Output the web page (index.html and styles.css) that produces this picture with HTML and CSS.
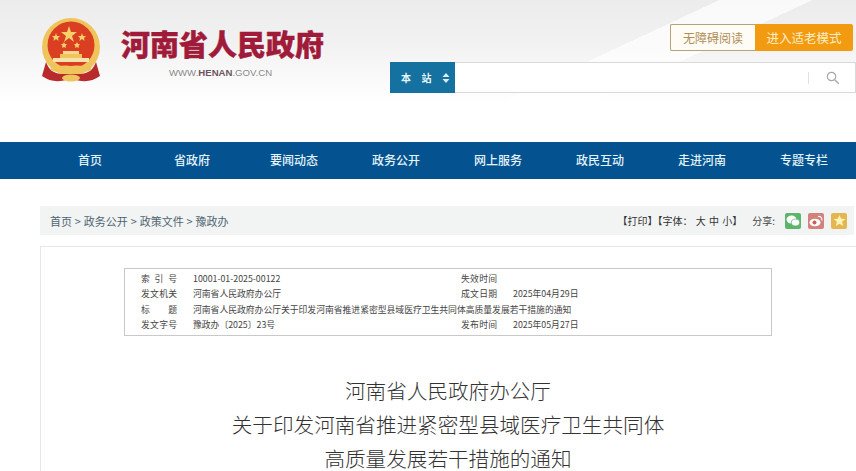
FILE: index.html
```html
<!DOCTYPE html>
<html lang="zh-CN">
<head>
    <meta charset="UTF-8">
    <meta name="viewport" content="width=device-width, initial-scale=1.0">
    <title>河南省人民政府办公厅关于印发河南省推进紧密型县域医疗卫生共同体高质量发展若干措施的通知</title>
    <link rel="stylesheet" href="styles.css">
</head>
<body>
    <header class="site-header">
        <div class="brand">
            <svg class="emblem" width="60" height="66" viewBox="0 0 60 66">
                <circle cx="30" cy="29" r="29" fill="#f0c45c"/>
                <circle cx="30" cy="27" r="23.5" fill="#da3f22"/>
                <polygon points="28,8 30,14 36,14 31,18 33,24 28,20 23,24 25,18 20,14 26,14" fill="#f7cf6b"/>
                <polygon points="15,15 16,18 19,18 17,20 17.500,23 15,21 12.500,23 13,20 11,18 14,18" fill="#f7cf6b"/>
                <polygon points="41,15 42,18 45,18 43,20 43.500,23 41,21 38.500,23 39,20 37,18 40,18" fill="#f7cf6b"/>
                <polygon points="23,24 24,26 26,26 24.500,28 25,30 23,29 21,30 21.500,28 20,26 22,26" fill="#f7cf6b"/>
                <polygon points="36,24 37,26 39,26 37.500,28 38,30 36,29 34,30 34.500,28 33,26 35,26" fill="#f7cf6b"/>
                <rect x="22" y="33" width="16" height="3" fill="#f6d98f"/>
                <rect x="19" y="36" width="22" height="4" fill="#f0c45c"/>
                <rect x="12" y="40" width="36" height="4" fill="#f6e3ab"/>
                <path d="M5 44 C8 52 12 55 20 56 L40 56 C48 55 52 52 55 44 L59 58 C50 64 42 65 30 60 C18 65 10 64 1 58 Z" fill="#b92a2c"/>
                <path d="M10 45 C16 50 22 46 30 48 C38 46 44 50 50 45 L50 52 C42 56 36 52 30 54 C24 52 18 56 10 52 Z" fill="#f0c45c"/>
                <ellipse cx="30" cy="60" rx="9" ry="3.500" fill="#f0c45c"/>
            </svg>
            <div class="brand-text">
                <div class="brand-name">河南省人民政府</div>
                <div class="brand-url">WWW.<b>HENAN</b>.GOV.CN</div>
            </div>
        </div>
        <div class="header-right">
            <div class="mode-buttons">
                <a class="mode-btn">无障碍阅读</a>
                <a class="mode-btn mode-old">进入适老模式</a>
            </div>
            <div class="search-box">
                <div class="search-scope">
                    <span>本&nbsp;&nbsp;站</span>
                    <svg width="8" height="12" viewBox="0 0 8 12"><path d="M4 1 L7.500 5 L0.500 5 Z M0.500 7 L7.500 7 L4 11 Z" fill="#d8eef6"/></svg>
                </div>
                <div class="search-input"></div>
                <div class="search-sep"></div>
                <svg class="search-icon" width="14" height="14" viewBox="0 0 14 14"><circle cx="5.500" cy="5.500" r="4.200" fill="none" stroke="#a9a9a9" stroke-width="1.200"/><path d="M8.700 8.700 L12.800 12.800" stroke="#a9a9a9" stroke-width="1.400"/></svg>
            </div>
        </div>
    </header>

    <nav class="main-nav">
        <a>首页</a>
        <a>省政府</a>
        <a>要闻动态</a>
        <a>政务公开</a>
        <a>网上服务</a>
        <a>政民互动</a>
        <a>走进河南</a>
        <a>专题专栏</a>
    </nav>

    <div class="crumb-bar">
        <div class="crumbs">首页 &gt; 政务公开 &gt; 政策文件 &gt; 豫政办</div>
        <div class="tools">
            <span class="tool-links">【打印】【字体： 大 中 小】</span>
            <span class="share-label">分享:</span>
            <a class="share share-wechat">
                <svg width="14" height="12" viewBox="0 0 14 12"><ellipse cx="5.500" cy="4.500" rx="5" ry="4" fill="#fff"/><ellipse cx="9.500" cy="7.500" rx="4.200" ry="3.400" fill="#fff" stroke="#5cb56b" stroke-width="0.700"/></svg>
            </a>
            <a class="share share-weibo">
                <svg width="14" height="12" viewBox="0 0 14 12"><ellipse cx="6" cy="7.500" rx="5.500" ry="3.800" fill="#fff"/><circle cx="5.500" cy="7.500" r="2" fill="#c9605a"/><path d="M9 1.500 C11.500 1 13.500 3 12.800 5.500" fill="none" stroke="#fff" stroke-width="1.100"/></svg>
            </a>
            <a class="share share-star">
                <svg width="13" height="13" viewBox="0 0 14 14"><polygon points="7,1 8.800,5.200 13.300,5.500 9.800,8.400 11,12.900 7,10.400 3,12.900 4.200,8.400 0.700,5.500 5.200,5.200" fill="#fdf2b8"/></svg>
            </a>
        </div>
    </div>

    <main class="doc-card">
        <div class="doc-meta">
            <div class="meta-label">索引号</div>
            <div>10001-01-2025-00122</div>
            <div class="meta-label">失效时间</div>
            <div></div>

            <div class="meta-label">发文机关</div>
            <div>河南省人民政府办公厅</div>
            <div class="meta-label">成文日期</div>
            <div>2025年04月29日</div>

            <div class="meta-label">标题</div>
            <div class="meta-wide">河南省人民政府办公厅关于印发河南省推进紧密型县域医疗卫生共同体高质量发展若干措施的通知</div>

            <div class="meta-label">发文字号</div>
            <div>豫政办〔2025〕23号</div>
            <div class="meta-label">发布时间</div>
            <div>2025年05月27日</div>
        </div>

        <h1 class="doc-title">
            <span>河南省人民政府办公厅</span>
            <span>关于印发河南省推进紧密型县域医疗卫生共同体</span>
            <span>高质量发展若干措施的通知</span>
        </h1>
    </main>
</body>
</html>
```

FILE: styles.css
```css
html, body {
    margin: 0;
    padding: 0;
}
body {
    height: 471px;
    overflow: hidden;
    background-color: #fff;
    font-family: "Liberation Sans", "Noto Sans CJK SC", sans-serif;
    color: #333;
}
a {
    text-decoration: none;
    color: inherit;
}

.site-header {
    height: 142px;
    box-sizing: border-box;
    padding: 18px 0 0 41px;
    display: flex;
    justify-content: space-between;
    background:
        linear-gradient(155deg, transparent 0 62%, rgba(255,255,255,0.7) 62% 70%, transparent 70%),
        linear-gradient(to bottom, #ececec 0, #f1f1f1 40px, #fbfbfb 85px, #fff 105px);
}
.brand {
    display: flex;
    gap: 20px;
}
.emblem {
    display: block;
}
.brand-text {
    padding-top: 6px;
}
.brand-name {
    font-family: "Noto Sans CJK SC", sans-serif;
    font-weight: 900;
    font-size: 29px;
    line-height: 38px;
    color: #a01a3a;
    -webkit-text-stroke: 0.4px #a01a3a;
    white-space: nowrap;
}
.brand-url {
    margin: 5px 0 0 48px;
    font-size: 9.6px;
    line-height: 12px;
    color: #8a8a8a;
}
.brand-url b {
    color: #6d5560;
}

.header-right {
    width: 466px;
    display: flex;
    flex-direction: column;
    align-items: flex-end;
}
.mode-buttons {
    display: flex;
    margin: 6px 3px 0 0;
}
.mode-btn {
    width: 85px;
    height: 27px;
    box-sizing: border-box;
    border: 1px solid #b5a27e;
    border-right: none;
    border-radius: 2px 0 0 2px;
    background-color: #fffcf5;
    color: #b08d55;
    font-family: "Noto Sans CJK SC", sans-serif;
    font-size: 12px;
    line-height: 25px;
    text-align: center;
}
.mode-old {
    width: 98px;
    border: none;
    border-radius: 0 2px 2px 0;
    background-color: #f29a10;
    color: #fdeec6;
    font-size: 12.5px;
    line-height: 27px;
}
.search-box {
    width: 466px;
    height: 31px;
    margin-top: 11px;
    box-sizing: border-box;
    border: 1px solid #d9d9d9;
    border-left: none;
    background-color: #fff;
    display: flex;
    align-items: center;
}
.search-scope {
    width: 65px;
    height: 31px;
    margin-top: -1px;
    margin-bottom: -1px;
    padding-left: 11px;
    box-sizing: border-box;
    background-color: #15719f;
    color: #e8f6fb;
    font-family: "Noto Sans CJK SC", sans-serif;
    font-size: 10px;
    font-weight: 700;
    word-spacing: 3px;
    display: flex;
    align-items: center;
    gap: 10px;
}
.search-input {
    flex: 1;
}
.search-sep {
    width: 1px;
    height: 12px;
    background-color: #e3e3e3;
    margin-right: 17px;
}
.search-icon {
    margin-right: 15px;
}

.main-nav {
    height: 37px;
    padding-left: 39px;
    display: flex;
    background-color: #04528f;
}
.main-nav a {
    width: 102px;
    text-align: center;
    color: #e3f4fb;
    font-family: "Noto Sans CJK SC", sans-serif;
    font-size: 12px;
    font-weight: 500;
    line-height: 36px;
}

.crumb-bar {
    height: 29px;
    margin: 27px 2px 0 40px;
    padding: 0 7px 0 10px;
    display: flex;
    justify-content: space-between;
    align-items: center;
    background-color: #f2f4f4;
    font-family: "Noto Sans CJK SC", sans-serif;
}
.crumbs {
    font-size: 11px;
    word-spacing: 0.4px;
    color: #4f6470;
}
.tools {
    display: flex;
    align-items: center;
}
.tool-links {
    font-size: 10px;
    word-spacing: 1px;
    color: #333;
    white-space: pre;
    margin-right: 10px;
}
.share-label {
    font-size: 10px;
    color: #444;
    margin-right: 10px;
}
.share {
    width: 16px;
    height: 16px;
    margin-right: 7px;
    border-radius: 2px;
    display: flex;
    align-items: center;
    justify-content: center;
}
.share:last-child {
    margin-right: 0;
}
.share-wechat {
    background-color: #5cb56b;
}
.share-weibo {
    background-color: #d2827b;
}
.share-star {
    background-color: #e4b64f;
}

.doc-card {
    height: 225px;
    box-sizing: border-box;
    margin: 11px 0 0 40px;
    border: 1px solid #e6e6e6;
    border-right: none;
    border-bottom: none;
    padding: 21px 0 0 83px;
}
.doc-meta {
    width: 648px;
    height: 68px;
    box-sizing: border-box;
    border: 1px solid #c9c9c9;
    padding: 2px 0 0 16px;
    display: grid;
    grid-template-columns: 36px 252px 36px 1fr;
    column-gap: 16px;
    grid-auto-rows: 15.300px;
    align-items: center;
    font-family: "Noto Sans CJK SC", sans-serif;
    font-size: 8.800px;
    color: #444;
}
.meta-label {
    text-align: justify;
    text-align-last: justify;
}
.meta-wide {
    grid-column: 2 / 5;
}
.doc-title {
    width: 648px;
    margin: 43px 0 0;
    display: flex;
    flex-direction: column;
    gap: 11px;
    text-align: center;
    font-family: "Noto Sans CJK SC", serif;
    font-size: 20.600px;
    font-weight: 300;
    line-height: 23px;
    color: #333;
}
```
